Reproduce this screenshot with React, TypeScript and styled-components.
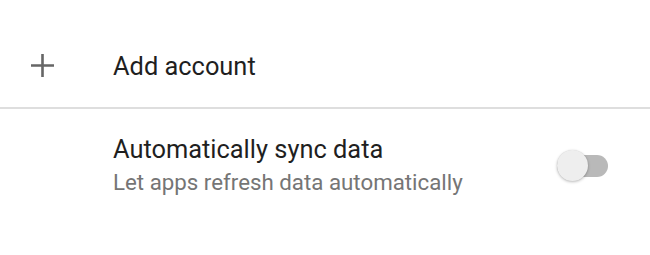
import React from "react";
import styled, { createGlobalStyle } from "styled-components";

const GlobalStyle = createGlobalStyle`
  html, body {
    margin: 0;
    padding: 0;
    background: #ffffff;
  }
  body {
    font-family: Roboto, "Noto Sans", "Liberation Sans", sans-serif;
    -webkit-font-smoothing: antialiased;
  }
`;

const Page = styled.div`
  width: 650px;
  height: 255px;
  background: #ffffff;
  display: flex;
  flex-direction: column;
`;

const ActionRow = styled.div`
  height: 107px;
  box-sizing: border-box;
  padding-top: 24px;
  padding-left: 31px;
  display: flex;
  align-items: center;
`;

const IconSlot = styled.div`
  width: 23px;
  height: 23px;
  margin-right: 59px;
  display: flex;
  color: #666666;
`;

const Title = styled.div`
  font-size: 25.4px;
  line-height: 30px;
  color: #1f1f1f;
  letter-spacing: 0;
`;

const Divider = styled.div`
  height: 2px;
  background: #dedede;
`;

const SettingRow = styled.div`
  box-sizing: border-box;
  padding: 25px 42px 0 113px;
  display: flex;
  align-items: center;
  justify-content: space-between;
`;

const TextBlock = styled.div`
  display: flex;
  flex-direction: column;
`;

const Subtitle = styled.div`
  font-size: 22.3px;
  line-height: 27px;
  margin-top: 5px;
  color: #757575;
`;

const Switch = styled.div<{ $on: boolean }>`
  position: relative;
  width: 51px;
  height: 22px;
  border-radius: 11px;
  background: ${(p) => (p.$on ? "#80cbc4" : "#b9b9b9")};
  margin-top: 2px;
`;

const Thumb = styled.div<{ $on: boolean }>`
  position: absolute;
  top: -5px;
  left: ${(p) => (p.$on ? "21px" : "0px")};
  width: 31px;
  height: 31px;
  border-radius: 50%;
  background: ${(p) => (p.$on ? "#009688" : "#eeeeee")};
  box-shadow: 0 1px 3px rgba(0, 0, 0, 0.26), 0 0 1px rgba(0, 0, 0, 0.12);
`;

const PlusIcon = () => (
  <svg width="23" height="23" viewBox="0 0 23 23">
    <path
      d="M11.5 0 V23 M0 11.5 H23"
      stroke="currentColor"
      strokeWidth="2.6"
      fill="none"
    />
  </svg>
);

export default function App() {
  const syncOn = false;
  return (
    <>
      <GlobalStyle />
      <Page>
        <ActionRow>
          <IconSlot>
            <PlusIcon />
          </IconSlot>
          <Title>Add account</Title>
        </ActionRow>
        <Divider />
        <SettingRow>
          <TextBlock>
            <Title>Automatically sync data</Title>
            <Subtitle>Let apps refresh data automatically</Subtitle>
          </TextBlock>
          <Switch $on={syncOn}>
            <Thumb $on={syncOn} />
          </Switch>
        </SettingRow>
      </Page>
    </>
  );
}
